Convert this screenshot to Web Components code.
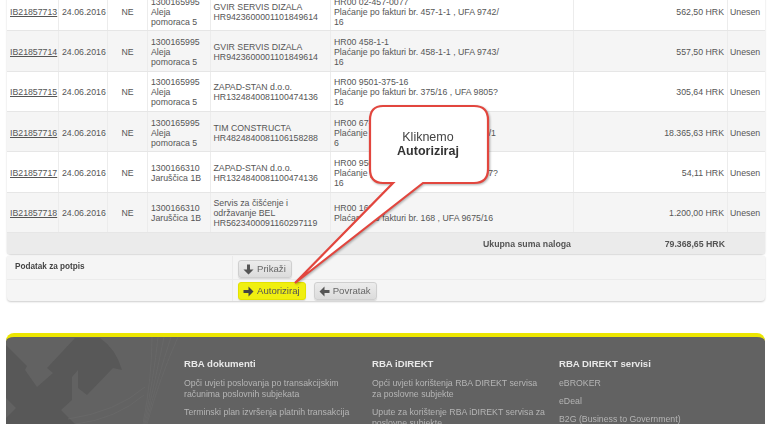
<!DOCTYPE html>
<html>
<head>
<meta charset="utf-8">
<style>
  html, body { margin: 0; background: #fff; }
  body { width: 768px; height: 424px; overflow: hidden; position: relative; font: 8.75px/10px "Liberation Sans", Arial, sans-serif; color: #555; }
  #page { filter: blur(0.45px); height: 424px; overflow: hidden; position: relative; }
</style>
</head>
<body>
<div id="page">
  <order-table>
    <order-row id-no="IB21857713" amount="562,50 HRK"><span slot="place">1300165995<br>Aleja<br>pomoraca 5</span><span slot="party">GVIR SERVIS DIZALA<br>HR9423600001101849614</span><span slot="desc">HR00 02-457-0077<br>Plaćanje po fakturi br. 457-1-1 , UFA 9742/<br>16</span></order-row>
    <order-row id-no="IB21857714" amount="557,50 HRK" alt><span slot="place">1300165995<br>Aleja<br>pomoraca 5</span><span slot="party">GVIR SERVIS DIZALA<br>HR9423600001101849614</span><span slot="desc">HR00 458-1-1<br>Plaćanje po fakturi br. 458-1-1 , UFA 9743/<br>16</span></order-row>
    <order-row id-no="IB21857715" amount="305,64 HRK"><span slot="place">1300165995<br>Aleja<br>pomoraca 5</span><span slot="party">ZAPAD-STAN d.o.o.<br>HR1324840081100474136</span><span slot="desc">HR00 9501-375-16<br>Plaćanje po fakturi br. 375/16 , UFA 9805?<br>16</span></order-row>
    <order-row id-no="IB21857716" amount="18.365,63 HRK" alt><span slot="place">1300165995<br>Aleja<br>pomoraca 5</span><span slot="party">TIM CONSTRUCTA<br>HR4824840081106158288</span><span slot="desc">HR00 67-16<br>Plaćanje po fakturi br. 67-16 , UFA 9806/1<br>6</span></order-row>
    <order-row id-no="IB21857717" amount="54,11 HRK"><span slot="place">1300166310<br>Jaruščica 1B</span><span slot="party">ZAPAD-STAN d.o.o.<br>HR1324840081100474136</span><span slot="desc">HR00 9501-376-16<br>Plaćanje po fakturi br. 376/16 , UFA 9807?<br>16</span></order-row>
    <order-row id-no="IB21857718" amount="1.200,00 HRK" alt><span slot="place">1300166310<br>Jaruščica 1B</span><span slot="party">Servis za čišćenje i<br>održavanje BEL<br>HR5623400091160297119</span><span slot="desc">HR00 168<br>Plaćanje po fakturi br. 168 , UFA 9675/16</span></order-row>
    <order-total label="Ukupna suma naloga" amount="79.368,65 HRK"></order-total>
  </order-table>

  <sign-panel></sign-panel>

  <site-footer>
    <footer-col heading="RBA dokumenti">
      <p>Opči uvjeti poslovanja po transakcijskim<br>računima poslovnih subjekata</p>
      <p>Terminski plan izvršenja platnih transakcija</p>
    </footer-col>
    <footer-col heading="RBA iDIREKT">
      <p>Opći uvjeti korištenja RBA DIREKT servisa<br>za poslovne subjekte</p>
      <p>Upute za korištenje RBA iDIREKT servisa za<br>poslovne subjekte</p>
    </footer-col>
    <footer-col heading="RBA DIREKT servisi">
      <p>eBROKER</p>
      <p>eDeal</p>
      <p>B2G (Business to Government)</p>
    </footer-col>
  </site-footer>

  <call-out><span>Kliknemo</span><b>Autoriziraj</b></call-out>
</div>

<script>
class OrderTable extends HTMLElement {
  constructor() {
    super();
    this.attachShadow({ mode: 'open' }).innerHTML = `
      <style>
        :host { display: block; margin: -9px 3px 0 7px; border-radius: 0 0 4px 4px; box-shadow: 0 1px 2px rgba(0,0,0,.18); background: #ebebeb; }
      </style>
      <slot></slot>`;
  }
}

class OrderRow extends HTMLElement {
  constructor() {
    super();
    this.attachShadow({ mode: 'open' }).innerHTML = `
      <style>
        :host { display: grid; grid-template-columns: 52px 49px 40px 63px 120px 243px 154px 37px; height: 40.35px; box-sizing: border-box; background: #fff; border-bottom: 1px solid #e6e6e6; }
        :host([alt]) { background: #f5f5f5; }
        div { display: flex; align-items: center; padding: 2px 0 0 3px; border-right: 1px solid #ececec; min-width: 0; white-space: nowrap; overflow: hidden; }
        .no a { color: #555; text-decoration: underline; }
        .ne { justify-content: center; padding-left: 0; }
        .party { padding-left: 2.5px; }
        .amount { justify-content: flex-end; padding-right: 3px; }
        .st { border-right: 0; padding-left: 2px; }
      </style>
      <div class="no"><a></a></div>
      <div>24.06.2016</div>
      <div class="ne">NE</div>
      <div><slot name="place"></slot></div>
      <div class="party"><slot name="party"></slot></div>
      <div><slot name="desc"></slot></div>
      <div class="amount"></div>
      <div class="st">Unesen</div>`;
  }

  connectedCallback() {
    this.shadowRoot.querySelector('a').textContent = this.getAttribute('id-no');
    this.shadowRoot.querySelector('.amount').textContent = this.getAttribute('amount');
  }
}

class OrderTotal extends HTMLElement {
  constructor() {
    super();
    this.attachShadow({ mode: 'open' }).innerHTML = `
      <style>
        :host { display: grid; grid-template-columns: 567px 154px 37px; height: 21px; align-items: center; font-weight: bold; background: #ebebeb; }
        div { text-align: right; padding-right: 3px; }
      </style>
      <div class="l"></div><div class="a"></div><div></div>`;
  }

  connectedCallback() {
    this.shadowRoot.querySelector('.l').textContent = this.getAttribute('label');
    this.shadowRoot.querySelector('.a').textContent = this.getAttribute('amount');
  }
}

class RbaButton extends HTMLElement {
  constructor() {
    super();
    this.attachShadow({ mode: 'open' }).innerHTML = `
      <style>
        :host { display: inline-flex; align-items: center; gap: 3px; height: 16px; padding: 0 5px 0 4px; border-radius: 3px; border: 1px solid #cfcfcf; background: linear-gradient(#ececec, #dcdcdc); color: #666; font-size: 9.6px; box-shadow: 0 1px 1px rgba(0,0,0,.12); }
        :host([primary]) { background: #f0ef10; border-color: #e3e200; color: #555; }
        svg { width: 11px; height: 11px; display: block; fill: #555; }
        :host([primary]) svg { fill: #444; }
      </style>
      <svg viewBox="0 0 11 11"><path></path></svg><slot></slot>`;
  }

  connectedCallback() {
    const arrows = {
      down: 'M4 0.5h3v5h3.5L5.5 10.5 0.5 5.5H4z',
      right: 'M0.5 4h5V0.5l5 5-5 5V7h-5z',
      left: 'M10.5 4h-5V0.5l-5 5 5 5V7h5z',
    };
    this.shadowRoot.querySelector('path').setAttribute('d', arrows[this.getAttribute('icon')]);
  }
}

class SignPanel extends HTMLElement {
  constructor() {
    super();
    this.attachShadow({ mode: 'open' }).innerHTML = `
      <style>
        :host { display: grid; grid-template-columns: 225px 1fr; grid-template-rows: 24px 21px; margin: 2px 3px 0 7px; background: #f5f5f5; border-radius: 0 0 4px 4px; box-shadow: 0 1px 2px rgba(0,0,0,.2); }
        .lab { padding: 6px 0 0 8px; font-weight: bold; font-size: 8.2px; color: #444; }
        .c { display: flex; align-items: flex-start; gap: 8px; padding: 4px 0 0 5px; border-left: 1px solid #ebebeb; }
        .top { border-bottom: 1px solid #ebebeb; }
        .c.bot { padding-top: 2px; }
      </style>
      <div class="lab top">Podatak za potpis</div>
      <div class="c top"><rba-button icon="down">Prikaži</rba-button></div>
      <div></div>
      <div class="c bot"><rba-button icon="right" primary>Autoriziraj</rba-button><rba-button icon="left">Povratak</rba-button></div>`;
  }
}

class SiteFooter extends HTMLElement {
  constructor() {
    super();
    this.attachShadow({ mode: 'open' }).innerHTML = `
      <style>
        :host { display: block; position: relative; margin: 32px 3px 0 6px; height: 110px; background: #626262; border-top: 4px solid #ece600; border-radius: 8px 8px 0 0; overflow: hidden; }
        svg { position: absolute; left: 0; top: 0; }
        .cols { position: relative; display: grid; grid-template-columns: 188px 187px 1fr; padding: 21px 0 0 178px; }
      </style>
      <svg width="200" height="90" viewBox="0 0 200 90">
        <path fill="#585858" d="M0 8 21 29 19 33 31 50 47 36 41 31 69 1H94Q110 12 116 33L107 31 81 58 72 51V33L66 40V63L55 73 69 87H0V81L10 71 0 61z"></path>
        <g fill="none" stroke="#6c6c6c" stroke-width=".6">
          <path d="M146 0Q146 40 137 87"></path>
          <path d="M152 0Q148 40 138 87"></path>
          <path d="M158 0Q150 40 139 87"></path>
          <path d="M165 0Q152 40 140 87"></path>
          <path d="M172 0Q154 40 141 87"></path>
          <path d="M139 50Q110 75 62 82"></path>
          <path d="M138 58Q110 82 70 87"></path>
        </g>
      </svg>
      <div class="cols"><slot></slot></div>`;
  }
}

class FooterCol extends HTMLElement {
  constructor() {
    super();
    this.attachShadow({ mode: 'open' }).innerHTML = `
      <style>
        :host { display: block; color: #b5b5b5; font-size: 8.75px; line-height: 10.7px; }
        h4 { margin: 0 0 8px; font-size: 9.6px; line-height: 12px; color: #e8e8e8; font-weight: bold; }
        ::slotted(p) { margin: 0 0 7.5px; white-space: nowrap; }
      </style>
      <h4></h4><slot></slot>`;
  }

  connectedCallback() {
    this.shadowRoot.querySelector('h4').textContent = this.getAttribute('heading');
  }
}

class CallOut extends HTMLElement {
  constructor() {
    super();
    this.attachShadow({ mode: 'open' }).innerHTML = `
      <style>
        :host { position: absolute; left: 280px; top: 100px; width: 220px; height: 190px; display: block; }
        svg { position: absolute; inset: 0; overflow: visible; }
        .t { position: absolute; left: 89px; top: 30px; width: 118px; display: flex; flex-direction: column; align-items: center; font-size: 12.5px; line-height: 14px; color: #444; }
        ::slotted(b) { color: #333; }
      </style>
      <svg width="220" height="190" viewBox="0 0 220 190">
        <path d="M103 6H194Q208 6 208 20V69Q208 83 194 83H143L15 183 113 83H103Q90 83 90 69V20Q90 6 103 6z" fill="#fff" stroke="#e2463e" stroke-width="2.2" stroke-linejoin="miter" style="filter: drop-shadow(1px 1px 1px rgba(0,0,0,.3))"></path>
      </svg>
      <div class="t"><slot></slot></div>`;
  }
}

customElements.define('order-table', OrderTable);
customElements.define('order-row', OrderRow);
customElements.define('order-total', OrderTotal);
customElements.define('rba-button', RbaButton);
customElements.define('sign-panel', SignPanel);
customElements.define('site-footer', SiteFooter);
customElements.define('footer-col', FooterCol);
customElements.define('call-out', CallOut);
</script>
</body>
</html>
